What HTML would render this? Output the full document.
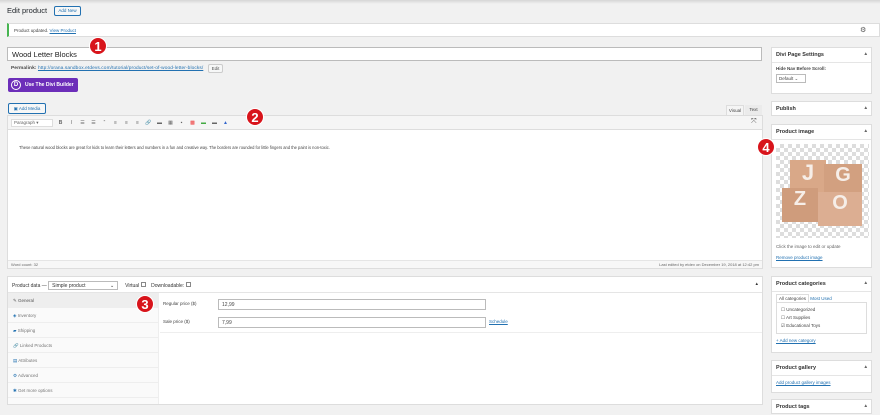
<!DOCTYPE html><html><head><style>
*{box-sizing:border-box;margin:0;padding:0}
body{width:880px;height:408px;background:#f1f1f1;font-family:"Liberation Sans",sans-serif;color:#444;position:relative;overflow:hidden;font-size:5px}
.a{position:absolute}
.box{position:absolute;background:#fff;border:1px solid #ddd}
.hd{font-size:5.5px;color:#333;font-weight:bold;padding:4px 4px;border-bottom:1px solid #e5e5e5;height:15px;position:relative}
.hd:after{content:"▴";position:absolute;right:4px;top:3px;font-size:5px;color:#666}
.lnk{color:#2271b1;text-decoration:underline}
.num{position:absolute;width:18px;height:18px;border-radius:50%;background:#d8141b;color:#fff;font-weight:bold;font-size:13px;text-align:center;line-height:18px;border:1px solid #fff}
.btn{position:absolute;border:1px solid #2271b1;color:#2271b1;background:#f6f7f7;font-size:4.5px;border-radius:2px;text-align:center}
.tab{height:15px;border-bottom:1px solid #eee;padding:5px 5px;font-size:4.5px;color:#777}
.tb span{display:inline-block;width:7px;text-align:center;margin-right:4px;color:#666;font-size:5px}
</style></head><body>
<div class="a" style="left:0;top:0;width:880px;height:4px;background:linear-gradient(#d6d6d6,#f1f1f1)"></div>
<div class="a" style="left:7px;top:6px;font-size:7.5px;color:#23282d">Edit product</div>
<div class="btn" style="left:54px;top:6px;width:27px;height:10px;line-height:8px">Add New</div>
<div class="box" style="left:7px;top:23px;width:873px;height:14px;border-left:2px solid #46b450;font-size:4.5px;padding:4px 5px">Product updated. <span class="lnk">View Product</span></div>
<div class="a" style="left:860px;top:26px;font-size:7px;color:#555">⚙</div>
<div class="box" style="left:7px;top:47px;width:755px;height:14px;border-color:#bbb;font-size:7.5px;color:#222;padding:2px 4px">Wood Letter Blocks</div>
<div class="a" style="left:11px;top:66px;font-size:4.8px;letter-spacing:0.1px"><b>Permalink:</b> <span class="lnk">http://orana.sandbox.etdevs.com/tutorial/product/set-of-wood-letter-blocks/</span></div>
<div class="btn" style="left:208px;top:64px;width:15px;height:9px;line-height:7px;border-color:#ccc;color:#555">Edit</div>
<div class="a" style="left:8px;top:78px;width:70px;height:14px;background:#6c2eb9;border-radius:2px;color:#fff;font-weight:bold;font-size:5px;line-height:14px;padding-left:17px">Use The Divi Builder</div>
<div class="a" style="left:11px;top:80px;width:10px;height:10px;border:1px solid #fff;border-radius:50%;color:#fff;font-size:6px;font-weight:bold;text-align:center;line-height:8px">D</div>
<div class="btn" style="left:8px;top:103px;width:38px;height:11px;line-height:9px">&#9635; Add Media</div>
<div class="a" style="left:726px;top:105px;width:18px;height:10px;background:#f5f5f5;border:1px solid #ddd;border-bottom:0;font-size:4.5px;text-align:center;line-height:9px">Visual</div>
<div class="a" style="left:745px;top:105px;width:17px;height:10px;background:#ebebeb;font-size:4.5px;text-align:center;line-height:9px">Text</div>
<div class="box" style="left:7px;top:115px;width:756px;height:154px"></div>
<div class="a tb" style="left:8px;top:116px;width:754px;height:14px;background:#f5f5f5;border-bottom:1px solid #ddd;padding:3px 3px;white-space:nowrap">
<span style="width:42px;border:1px solid #ddd;background:#fff;text-align:left;padding-left:2px;font-size:4.5px">Paragraph ▾</span><span><b>B</b></span><span><i>I</i></span><span>☰</span><span>☰</span><span>“</span><span>≡</span><span>≡</span><span>≡</span><span>🔗</span><span>▬</span><span>▦</span><span>▪</span><span style="color:#e33">▩</span><span style="color:#4a4">▬</span><span>▬</span><span style="color:#36c">▲</span></div>
<div class="a" style="left:751px;top:118px;font-size:7px;color:#555">⤧</div>
<div class="a" style="left:19px;top:145px;font-size:4.1px;color:#444">These natural wood blocks are great for kids to learn their letters and numbers in a fun and creative way. The borders are rounded for little fingers and the paint is non-toxic.</div>
<div class="a" style="left:8px;top:260px;width:754px;height:8px;background:#f7f7f7;border-top:1px solid #e5e5e5;font-size:4px;padding:1px 3px;color:#666">Word count: 32<span style="float:right">Last edited by etdev on December 19, 2018 at 12:42 pm</span></div>
<div class="box" style="left:7px;top:276px;width:756px;height:129px"></div>
<div class="a" style="left:8px;top:277px;width:754px;height:16px;border-bottom:1px solid #e5e5e5;font-size:5px;padding:4px 4px;color:#333">Product data — <span style="display:inline-block;width:70px;height:9px;border:1px solid #bbb;font-size:5px;padding:1px 3px;vertical-align:middle">Simple product<span style="float:right">⌄</span></span> &nbsp;&nbsp;&nbsp; Virtual <span style="display:inline-block;width:5px;height:5px;border:1px solid #888"></span> &nbsp;&nbsp; Downloadable: <span style="display:inline-block;width:5px;height:5px;border:1px solid #888"></span><span style="float:right">▴</span></div>
<div class="a" style="left:8px;top:293px;width:151px;height:111px;background:#fafafa;border-right:1px solid #eee">
<div class="tab" style="background:#eee;color:#555">✎ General</div>
<div class="tab"><span style="color:#2271b1">◈</span> Inventory</div><div class="tab"><span style="color:#2271b1">▰</span> Shipping</div><div class="tab"><span style="color:#2271b1">🔗</span> Linked Products</div><div class="tab"><span style="color:#2271b1">▤</span> Attributes</div><div class="tab"><span style="color:#2271b1">⚙</span> Advanced</div><div class="tab"><span style="color:#2271b1">✱</span> Get more options</div></div>
<div class="a" style="left:163px;top:301px;font-size:4.5px">Regular price ($)</div>
<div class="a" style="left:218px;top:299px;width:268px;height:11px;border:1px solid #bbb;background:#fff;font-size:5px;padding:2px 3px">12,99</div>
<div class="a" style="left:163px;top:319px;font-size:4.5px">Sale price ($)</div>
<div class="a" style="left:218px;top:317px;width:268px;height:11px;border:1px solid #bbb;background:#fff;font-size:5px;padding:2px 3px">7,99</div>
<div class="a lnk" style="left:489px;top:319px;font-size:4.5px">Schedule</div>
<div class="a" style="left:160px;top:332px;width:602px;height:1px;background:#eee"></div>
<div class="box" style="left:771px;top:47px;width:101px;height:47px"><div class="hd">Divi Page Settings</div><div style="padding:3px 4px;font-size:4.5px;font-weight:bold">Hide Nav Before Scroll:</div><div style="margin-left:4px;width:30px;height:9px;border:1px solid #bbb;font-size:4.5px;padding:1px 2px">Default ⌄</div></div>
<div class="box" style="left:771px;top:101px;width:101px;height:15px"><div class="hd" style="border:0">Publish</div></div>
<div class="box" style="left:771px;top:124px;width:101px;height:144px"><div class="hd">Product image</div>
<div style="margin:4px 4px;width:93px;height:94px;background-color:#fff;background-image:linear-gradient(45deg,#ddd 25%,transparent 25%,transparent 75%,#ddd 75%),linear-gradient(45deg,#ddd 25%,transparent 25%,transparent 75%,#ddd 75%);background-size:8px 8px;background-position:0 0,4px 4px;position:relative">
<div class="a" style="left:14px;top:16px;width:36px;height:34px;background:#d9a888;color:#f6eee8;font-size:22px;text-align:center;font-weight:bold">J</div>
<div class="a" style="left:48px;top:20px;width:38px;height:32px;background:#d2a080;color:#f6eee8;font-size:20px;text-align:center;font-weight:bold">G</div>
<div class="a" style="left:6px;top:44px;width:36px;height:34px;background:#cf9c7c;color:#f6eee8;font-size:20px;text-align:center;font-weight:bold">Z</div>
<div class="a" style="left:42px;top:48px;width:44px;height:34px;background:#dcae92;color:#f6eee8;font-size:20px;text-align:center;font-weight:bold">O</div></div>
<div style="padding:2px 4px;font-size:4.5px;color:#666">Click the image to edit or update</div>
<div style="padding:4px 4px;font-size:4.5px" class="lnk">Remove product image</div></div>
<div class="box" style="left:771px;top:276px;width:101px;height:77px"><div class="hd">Product categories</div>
<div style="margin:4px 4px 0;font-size:4.5px"><span style="border:1px solid #ddd;border-bottom:0;padding:1px 2px;background:#fff">All categories</span> <span style="color:#2271b1">Most Used</span></div>
<div style="margin:1px 4px;border:1px solid #ddd;height:32px;padding:3px 4px;font-size:4.5px;line-height:8px"><div>☐ Uncategorized</div><div>☐ Art Supplies</div><div>☑ Educational Toys</div></div>
<div class="lnk" style="padding:3px 4px;font-size:4.5px">+ Add new category</div></div>
<div class="box" style="left:771px;top:360px;width:101px;height:33px"><div class="hd">Product gallery</div><div class="lnk" style="padding:4px;font-size:4.5px">Add product gallery images</div></div>
<div class="box" style="left:771px;top:399px;width:101px;height:15px"><div class="hd" style="border:0">Product tags</div></div>
<div class="num" style="left:89px;top:37px">1</div>
<div class="num" style="left:246px;top:108px">2</div>
<div class="num" style="left:136px;top:295px">3</div>
<div class="num" style="left:757px;top:138px">4</div>
</body></html>
